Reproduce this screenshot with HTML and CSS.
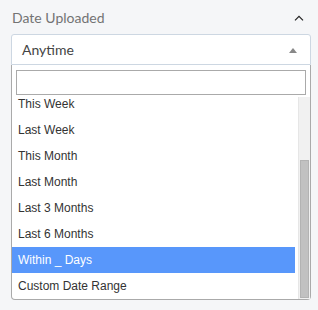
FILE: index.html
```html
<!DOCTYPE html>
<html lang="en">
<head>
<meta charset="utf-8">
<title>Date Uploaded filter</title>
<link rel="stylesheet" href="styles.css">
</head>
<body>
<div class="filter">
  <div class="filter-head">
    <span class="filter-title">Date Uploaded</span>
    <svg class="chevron" width="10" height="6" viewBox="0 0 10 6"><path d="M1 5.3 L5 1.3 L9 5.3" fill="none" stroke="#222" stroke-width="1.2"/></svg>
  </div>
  <div class="select">
    <span class="select-value">Anytime</span>
    <span class="select-arrow"></span>
  </div>
  <div class="dropdown">
    <div class="search"><input class="search-input" type="text"></div>
    <div class="results">
      <ul class="options">
        <li class="option">This Week</li>
        <li class="option">Last Week</li>
        <li class="option">This Month</li>
        <li class="option">Last Month</li>
        <li class="option">Last 3 Months</li>
        <li class="option">Last 6 Months</li>
        <li class="option option-active">Within _ Days</li>
        <li class="option">Custom Date Range</li>
      </ul>
      <div class="scrollbar"><div class="thumb"></div></div>
    </div>
  </div>
</div>
</body>
</html>
```
FILE: styles.css
```css
html, body {
  margin: 0;
  padding: 0;
  background: #f5f6f8;
}
body {
  width: 318px;
  height: 310px;
  overflow: hidden;
}
.filter {
  padding: 0 7px 0 11px;
}
.filter-head {
  display: flex;
  justify-content: space-between;
  align-items: center;
  padding: 8px 0 6px 1px;
  height: 20px;
}
.filter-title {
  font-family: Lato, "Open Sans", sans-serif;
  font-size: 14px;
  line-height: 20px;
  color: #737373;
}
.chevron {
  display: block;
  margin-right: 7px;
}
.select {
  box-sizing: border-box;
  height: 31px;
  width: 300px;
  background: #fff;
  border: 1px solid #cdd7e2;
  border-radius: 3px 3px 0 0;
  display: flex;
  align-items: center;
  justify-content: space-between;
  padding: 0 13px 0 10px;
}
.select-value {
  font-family: Lato, "Open Sans", sans-serif;
  font-size: 14px;
  line-height: 29px;
  color: #444;
}
.select-arrow {
  width: 0;
  height: 0;
  border-style: solid;
  border-width: 0 4px 5px 4px;
  border-color: transparent transparent #888 transparent;
  margin-top: 1px;
}
.dropdown {
  box-sizing: border-box;
  width: 300px;
  background: #fff;
  border: 1px solid #aaa;
  border-top: none;
  border-radius: 0 0 4px 4px;
}
.search {
  padding: 5px 4px 2px 4px;
}
.search-input {
  display: block;
  box-sizing: border-box;
  width: 100%;
  height: 25px;
  margin: 0;
  border: 1px solid #aaa;
  background: #fff;
  outline: none;
}
.results {
  display: flex;
  height: 202px;
}
.options {
  list-style: none;
  margin: 0 3px 0 0;
  padding: 0;
  flex: 1;
  display: flex;
  flex-direction: column;
  justify-content: flex-end;
  overflow: hidden;
}
.option {
  flex: none;
  font-family: "Liberation Sans", Arial, sans-serif;
  font-size: 12px;
  line-height: 14px;
  padding: 6px 6px;
  color: #333;
}
.option-active {
  background: #5897fb;
  color: #fff;
}
.scrollbar {
  width: 12px;
  box-sizing: border-box;
  background: #f1f1f1;
  border-left: 1px solid #e6e6e6;
  display: flex;
  flex-direction: column;
  justify-content: flex-end;
  padding: 0 1px 1px 1px;
}
.thumb {
  height: 138px;
  box-sizing: border-box;
  background: #c1c1c1;
  border: 1px solid #b3b3b3;
}
```
